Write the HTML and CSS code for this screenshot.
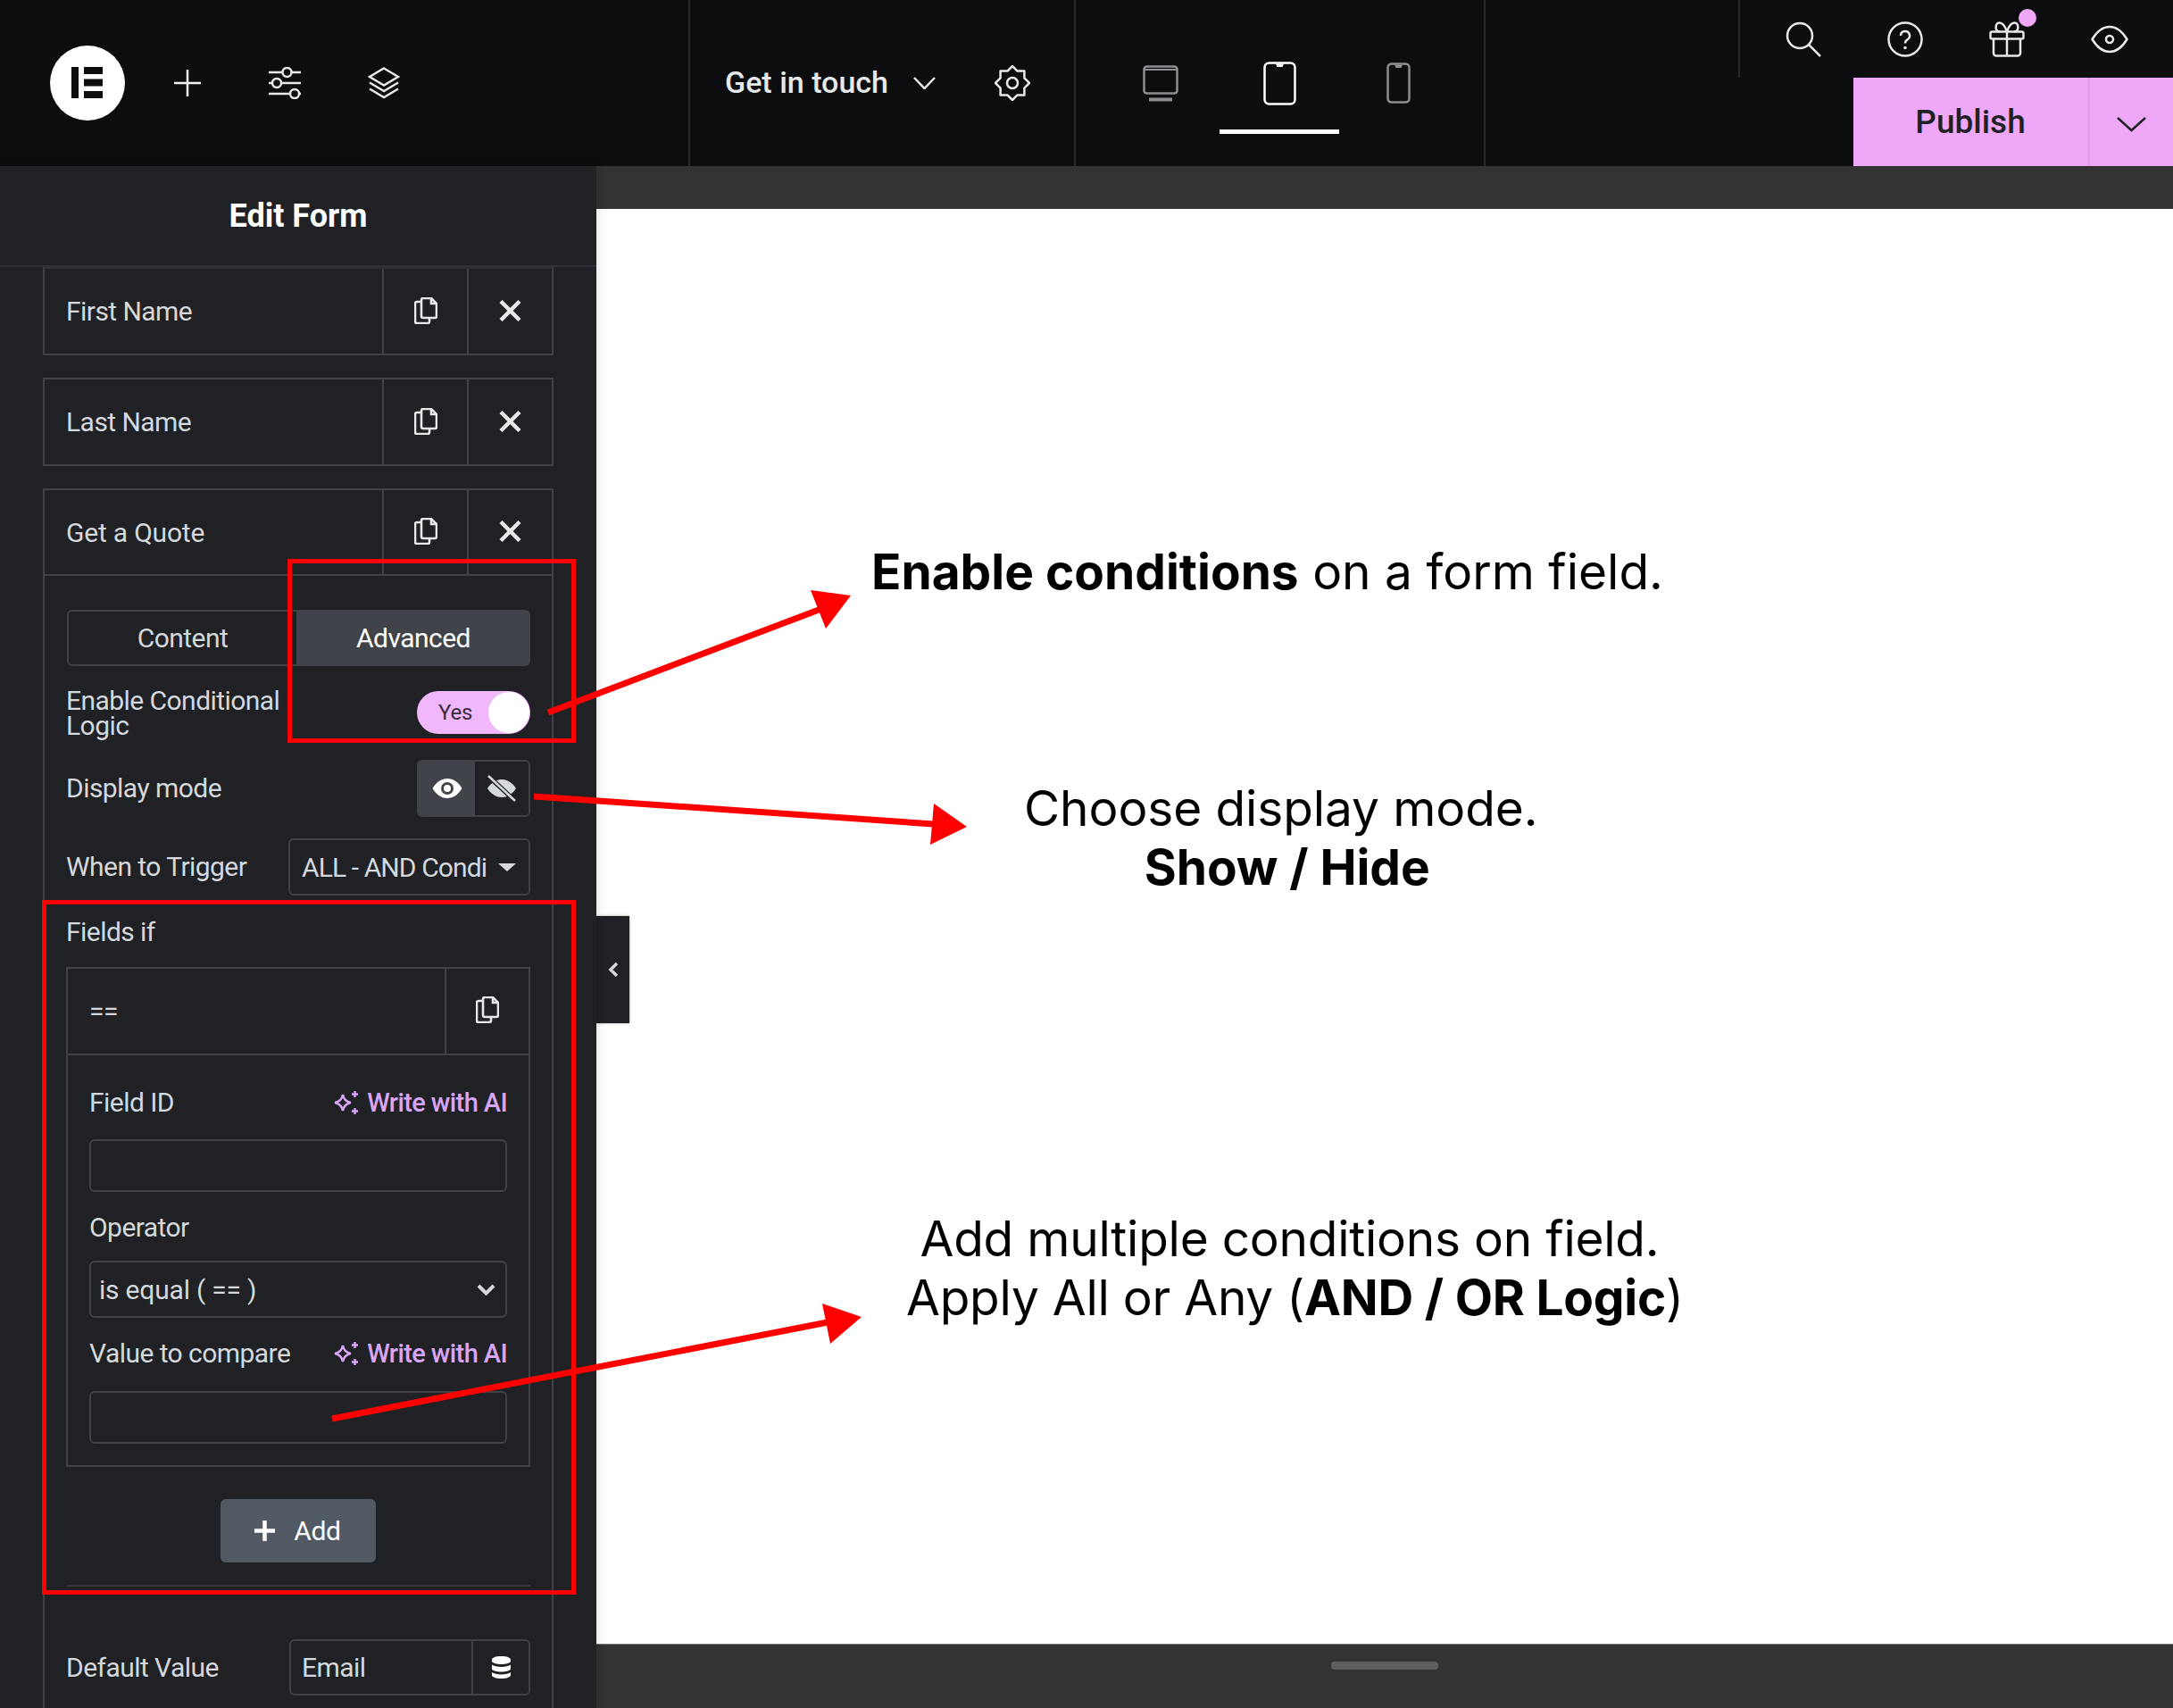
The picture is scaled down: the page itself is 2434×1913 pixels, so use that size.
FILE: index.html
```html
<!DOCTYPE html>
<html lang="en">
<head>
  <meta charset="UTF-8" />
  <meta name="viewport" content="width=device-width, initial-scale=1.0" />
  <title>Edit Form</title>
  <link rel="stylesheet" href="styles.css">
</head>
<body>
<div class="app">

  <header class="topbar">
    <div class="top-left">
      <svg class="logo" width="84" height="84" viewBox="0 0 84 84"><circle cx="42" cy="42" r="42" fill="#fff"/><path fill="#0c0d0e" d="M24 24h8v35h-8zM38 24h21v8H38zM38 37.500h21v8H38zM38 51h21v8H38z"/></svg>
      <svg class="ic-plus" width="30" height="30" viewBox="0 0 30 30"><path d="M15 0v30M0 15h30" stroke="#f2f3f4" stroke-width="2.500"/></svg>
      <svg class="ic-sliders" width="36" height="36" viewBox="0 0 36 36" fill="none" stroke="#e6e8ea" stroke-width="2.500"><path d="M0 6h15M26 6h10M0 18h4M14 18h22M0 30h24M34 30h2"/><circle cx="20.500" cy="6" r="5"/><circle cx="9" cy="18" r="5"/><circle cx="29" cy="30" r="5"/></svg>
      <svg class="ic-layers" width="36" height="36" viewBox="0 0 36 36" fill="none" stroke="#e6e8ea" stroke-width="2.500"><path d="M18 1.500 34 11 18 20.500 2 11z"/><path d="M2 17.500 18 27l16-9.500M2 24.500 18 34l16-9.500"/></svg>
    </div>

    <div class="top-doc">
      <span class="doc-name">Get in touch</span>
      <svg class="doc-chevron" width="25" height="14" viewBox="0 0 25 14" fill="none" stroke="#e6e8ea" stroke-width="2.500"><path d="M1 1l11.500 12L24 1"/></svg>
      <svg class="doc-gear" width="40" height="40" viewBox="0 0 40 40" fill="none" stroke="#e6e8ea" stroke-width="2.500" stroke-linejoin="round"><path d="M20 1 25.550 6.600 33.400 6.600 33.400 14.450 39 20 33.400 25.550 33.400 33.400 25.550 33.400 20 39 14.450 33.400 6.600 33.400 6.600 25.550 1 20 6.600 14.450 6.600 6.600 14.450 6.600z"/><circle cx="20" cy="20" r="6"/></svg>
    </div>

    <div class="top-devices">
      <div class="device-tab">
        <svg width="40" height="41" viewBox="0 0 40 41" fill="none" stroke="#8b8e92" stroke-width="2.500"><rect x="1.500" y="1.500" width="37" height="30" rx="3"/><path d="M1.500 5h37" stroke-width="2"/><path d="M7 38.500h26" stroke-width="4"/></svg>
      </div>
      <div class="device-tab active">
        <svg width="37" height="49" viewBox="0 0 37 49" fill="none" stroke="#fff" stroke-width="2.500"><rect x="1.500" y="1.500" width="34" height="46" rx="5"/><path d="M14 2.500h9l-1.500 3.500h-6z" fill="#fff" stroke="none"/></svg>
      </div>
      <div class="device-tab">
        <svg width="27" height="46" viewBox="0 0 27 46" fill="none" stroke="#8b8e92" stroke-width="2.500"><rect x="1.500" y="1.500" width="24" height="43" rx="4"/><path d="M9 2.500h9l-1.500 3.500h-6z" fill="#8b8e92" stroke="none"/></svg>
      </div>
    </div>

    <div class="top-right">
      <div class="top-tools">
        <svg width="40" height="40" viewBox="0 0 40 40" fill="none" stroke="#e6e8ea" stroke-width="2.500"><circle cx="16" cy="16" r="14"/><path d="M26 26l13 13"/></svg>
        <svg width="40" height="40" viewBox="0 0 40 40" fill="none" stroke="#e6e8ea" stroke-width="2.500"><circle cx="20" cy="20" r="18.500"/><path d="M15 16a5 5 0 1 1 7.500 4.300c-1.700 1-2.500 2-2.500 4.200"/><circle cx="20" cy="29.500" r="1.800" fill="#e6e8ea" stroke="none"/></svg>
        <div class="gift">
          <svg width="40" height="40" viewBox="0 0 40 40" fill="none" stroke="#e6e8ea" stroke-width="2.500"><rect x="1.500" y="11.500" width="37" height="8" rx="2"/><path d="M5 19.500v16a3 3 0 0 0 3 3h24a3 3 0 0 0 3-3v-16M20 11.500v27M20 11.500c-2-6-5-10-8.500-10-5 0-5.500 10 .5 10M20 11.500c2-6 5-10 8.500-10 5 0 5.500 10-.5 10"/></svg>
          <span class="gift-dot"></span>
        </div>
        <svg width="42" height="40" viewBox="0 0 42 40" fill="none" stroke="#e6e8ea" stroke-width="2.500"><path d="M1.500 20C7 11 13.500 6 21 6s14 5 19.500 14C35 29 28.500 34 21 34S7 29 1.500 20z"/><circle cx="21" cy="20" r="4"/></svg>
      </div>
      <div class="publish">
        <span class="publish-label">Publish</span>
        <span class="publish-more">
          <svg width="33" height="17" viewBox="0 0 33 17" fill="none" stroke="#1f2124" stroke-width="2.500"><path d="M1 1l15.500 14L32 1"/></svg>
        </span>
      </div>
    </div>
  </header>

  <div class="workspace">
    <aside class="panel">
      <div class="panel-title">Edit Form</div>

      <div class="field-row first">
        <div class="field-name">First Name</div>
        <div class="field-btn"><svg class="copy" width="26" height="30" viewBox="0 0 26 30" fill="none" stroke="#e6e8ea" stroke-width="2.600"><path d="M8 5H3a2 2 0 0 0-2 2v20a2 2 0 0 0 2 2h12a2 2 0 0 0 2-2v-4"/><path d="M8 3a2 2 0 0 1 2-2h9l6 6v14a2 2 0 0 1-2 2H10a2 2 0 0 1-2-2z"/><path d="M19 1v6h6"/></svg></div>
        <div class="field-btn"><svg width="25" height="24" viewBox="0 0 25 24" stroke="#e6e8ea" stroke-width="4.500"><path d="M2 1.500l21 21M23 1.500l-21 21"/></svg></div>
      </div>

      <div class="field-row">
        <div class="field-name">Last Name</div>
        <div class="field-btn"><svg class="copy" width="26" height="30" viewBox="0 0 26 30" fill="none" stroke="#e6e8ea" stroke-width="2.600"><path d="M8 5H3a2 2 0 0 0-2 2v20a2 2 0 0 0 2 2h12a2 2 0 0 0 2-2v-4"/><path d="M8 3a2 2 0 0 1 2-2h9l6 6v14a2 2 0 0 1-2 2H10a2 2 0 0 1-2-2z"/><path d="M19 1v6h6"/></svg></div>
        <div class="field-btn"><svg width="25" height="24" viewBox="0 0 25 24" stroke="#e6e8ea" stroke-width="4.500"><path d="M2 1.500l21 21M23 1.500l-21 21"/></svg></div>
      </div>

      <div class="field-open">
        <div class="field-row inner">
          <div class="field-name quote">Get a Quote</div>
          <div class="field-btn"><svg class="copy" width="26" height="30" viewBox="0 0 26 30" fill="none" stroke="#e6e8ea" stroke-width="2.600"><path d="M8 5H3a2 2 0 0 0-2 2v20a2 2 0 0 0 2 2h12a2 2 0 0 0 2-2v-4"/><path d="M8 3a2 2 0 0 1 2-2h9l6 6v14a2 2 0 0 1-2 2H10a2 2 0 0 1-2-2z"/><path d="M19 1v6h6"/></svg></div>
          <div class="field-btn"><svg width="25" height="24" viewBox="0 0 25 24" stroke="#e6e8ea" stroke-width="4.500"><path d="M2 1.500l21 21M23 1.500l-21 21"/></svg></div>
        </div>

        <div class="field-body">
          <div class="tabs">
            <div class="tab">Content</div>
            <div class="tab selected">Advanced</div>
          </div>

          <div class="row enable-row">
            <div class="label enable-label">Enable Conditional Logic</div>
            <div class="toggle"><span class="toggle-text">Yes</span><span class="toggle-knob"></span></div>
          </div>

          <div class="row mode-row">
            <div class="label">Display mode</div>
            <div class="choices">
              <div class="choice selected">
                <svg width="34" height="24" viewBox="0 0 34 24"><path fill="#fff" fill-rule="evenodd" d="M17 1C9.500 1 4 6 .5 12 4 18 9.500 23 17 23s13-5 16.500-11C30 6 24.500 1 17 1zm0 4a7 7 0 1 1 0 14 7 7 0 0 1 0-14z"/><circle cx="17" cy="12" r="4" fill="#fff"/></svg>
              </div>
              <div class="choice">
                <svg width="36" height="30" viewBox="0 0 36 30"><path fill="#d5d8dc" d="M18 5c7 0 12.500 4.500 16 10-1.500 2.500-3.500 4.700-6 6.500L11.500 6.500C13.500 5.500 15.700 5 18 5zM7.500 9 24 24c-1.900.6-3.900 1-6 1-7 0-12.500-4.500-16-10 1.400-2.300 3.300-4.300 5.500-6z"/><path d="M3 1l30 28" stroke="#1f2124" stroke-width="5"/><path d="M3 1l30 28" stroke="#d5d8dc" stroke-width="2.500"/></svg>
              </div>
            </div>
          </div>

          <div class="row trigger-row">
            <div class="label">When to Trigger</div>
            <div class="select-box">
              <span class="select-text">ALL - AND Condi</span>
              <span class="select-caret"></span>
            </div>
          </div>

          <div class="label fields-label">Fields if</div>

          <div class="repeater">
            <div class="repeater-head">
              <div class="repeater-name">==</div>
              <div class="repeater-btn"><svg class="copy" width="26" height="30" viewBox="0 0 26 30" fill="none" stroke="#e6e8ea" stroke-width="2.600"><path d="M8 5H3a2 2 0 0 0-2 2v20a2 2 0 0 0 2 2h12a2 2 0 0 0 2-2v-4"/><path d="M8 3a2 2 0 0 1 2-2h9l6 6v14a2 2 0 0 1-2 2H10a2 2 0 0 1-2-2z"/><path d="M19 1v6h6"/></svg></div>
            </div>
            <div class="repeater-body">
              <div class="label-row">
                <div class="label">Field ID</div>
                <div class="ai-link">
                  <svg width="28" height="26" viewBox="0 0 28 26" fill="none" stroke="#d9a5f7" stroke-width="2.400"><path d="M10 4c1 5.500 3.500 8 9 9-5.500 1-8 3.500-9 9-1-5.500-3.500-8-9-9 5.500-1 8-3.500 9-9z"/><path d="M23.500 0v7M20 3.500h7M23.500 19v7M20 22.500h7"/></svg>
                  <span>Write with AI</span>
                </div>
              </div>
              <input class="text-input first-input" type="text">
              <div class="label operator-label">Operator</div>
              <div class="op-select">
                <span>is equal ( == )</span>
                <svg width="21" height="13" viewBox="0 0 21 13" fill="none" stroke="#d5d8dc" stroke-width="4"><path d="M2 2l8.500 8.500L19 2"/></svg>
              </div>
              <div class="label-row value-row">
                <div class="label">Value to compare</div>
                <div class="ai-link">
                  <svg width="28" height="26" viewBox="0 0 28 26" fill="none" stroke="#d9a5f7" stroke-width="2.400"><path d="M10 4c1 5.500 3.500 8 9 9-5.500 1-8 3.500-9 9-1-5.500-3.500-8-9-9 5.500-1 8-3.500 9-9z"/><path d="M23.500 0v7M20 3.500h7M23.500 19v7M20 22.500h7"/></svg>
                  <span>Write with AI</span>
                </div>
              </div>
              <input class="text-input value-input" type="text">
            </div>
          </div>

          <div class="add-wrap">
            <button class="add-btn">
              <svg width="23" height="23" viewBox="0 0 23 23" stroke="#fff" stroke-width="4.500"><path d="M11.500 0v23M0 11.500h23"/></svg>
              <span>Add</span>
            </button>
          </div>

          <div class="body-rule"></div>

          <div class="row default-row">
            <div class="label">Default Value</div>
            <div class="dynamic-box">
              <span class="dynamic-text">Email</span>
              <span class="dynamic-btn">
                <svg width="21" height="25" viewBox="0 0 21 25" fill="#fff"><path d="M0 4c0-2.500 4.500-4 10.500-4S21 1.500 21 4v2c-1.500 2-5.500 3-10.500 3S1.500 8 0 6zM0 9.500C2 11 6 12 10.500 12S19 11 21 9.500v5c-1.500 2-5.500 3-10.500 3S1.500 16.500 0 14.500zM0 18c2 1.500 6 2.500 10.500 2.500S19 19.500 21 18v3c0 2.500-4.500 4-10.500 4S0 23.500 0 21z"/></svg>
              </span>
            </div>
          </div>
        </div>
      </div>
    </aside>

    <main class="canvas">
      <div class="canvas-strip"></div>
      <div class="canvas-page">
        <div class="collapse-tab">
          <svg width="12" height="18" viewBox="0 0 12 18" fill="none" stroke="#d5d8dc" stroke-width="3.500"><path d="M10 2 3 9l7 7"/></svg>
        </div>
        <p class="note note-enable"><b>Enable conditions</b> on a form field.</p>
        <p class="note note-mode">Choose display mode.<br><b class="note-offset">Show / Hide</b></p>
        <p class="note note-multi"><span class="note-lead">Add multiple conditions on field.</span><br>Apply All or Any (<b>AND / OR Logic</b>)</p>
      </div>
      <div class="canvas-foot"><span class="foot-handle"></span></div>
    </main>
  </div>

  <!-- red markup drawn over the screenshot -->
  <svg class="markup" width="2434" height="1913" viewBox="0 0 2434 1913" fill="none">
    <rect x="324.500" y="628.500" width="318" height="201" stroke="#f00" stroke-width="5"/>
    <rect x="49.500" y="1010.500" width="593" height="773" stroke="#f00" stroke-width="5"/>
    <path d="M614 798 925 680M598 892l448 31M372 1589l555-108" stroke="#f00" stroke-width="7"/>
    <path fill="#f00" d="M908 661l45 6-28 37zM1046 900l37 26-41 20zM921 1460l44 15-35 30z"/>
  </svg>
</div>
</body>
</html>
```

FILE: styles.css
```css
html, body { margin: 0; padding: 0; }
body {
  font-family: "Roboto", "Liberation Sans", sans-serif;
  background: #fff;
  color: #d5d8dc;
}
svg { display: block; flex: none; }

.app {
  position: relative;
  width: 2434px; height: 1913px;
  overflow: hidden;
  display: flex; flex-direction: column;
}

/* top bar */
.topbar {
  height: 186px; flex: none;
  display: flex;
  background: #0c0d0e;
}
.top-left {
  width: 771px; box-sizing: border-box;
  padding-left: 56px;
  display: flex; align-items: center;
}
.ic-plus { margin-left: 55px; }
.ic-sliders { margin-left: 76px; }
.ic-layers { margin-left: 75px; }

.top-doc {
  width: 432px; box-sizing: border-box;
  border-left: 2px solid #26282b;
  padding-left: 39px;
  display: flex; align-items: center;
}
.doc-name { font-size: 34px; font-weight: 500; color: #e6e8ea; white-space: nowrap; margin-top: -2px; }
.doc-chevron { margin-left: 28px; }
.doc-gear { margin-left: 66px; }

.top-devices {
  width: 459px; box-sizing: border-box;
  border-left: 2px solid #26282b;
  padding-left: 28px;
  display: flex; align-items: flex-start;
}
.device-tab {
  width: 134px; height: 150px; box-sizing: border-box;
  margin-right: -1px;
  padding-top: 41px;
  border-bottom: 5px solid transparent;
  display: flex; align-items: center; justify-content: center;
}
.device-tab.active { border-bottom-color: #fff; }

.top-right {
  flex: 1;
  border-left: 2px solid #26282b;
  display: flex; flex-direction: column; align-items: flex-end;
}
.top-tools {
  width: 487px; height: 87px; box-sizing: border-box;
  border-left: 2px solid #26282b;
  padding-left: 51px;
  display: flex; align-items: center; gap: 74px;
}
.gift { position: relative; }
.gift-dot {
  position: absolute; top: -14px; right: -13px;
  width: 20px; height: 20px;
  border-radius: 50%;
  background: #efa8f7;
}
.publish {
  width: 358px; height: 99px;
  display: flex;
  background: #efa8f7;
  color: #1f2124;
}
.publish-label {
  width: 262px;
  display: flex; align-items: center; justify-content: center;
  font-size: 37px; font-weight: 500;
}
.publish-more {
  flex: 1;
  border-left: 3px solid #e79df2;
  display: flex; align-items: center; justify-content: center;
  padding-top: 6px; box-sizing: border-box;
}

.workspace { flex: 1; display: flex; min-height: 0; }

/* left panel */
.panel {
  width: 668px; flex: none;
  background: #1f2124;
  box-shadow: 2px 0 8px rgba(0,0,0,0.12);
  position: relative; z-index: 1;
  letter-spacing: -0.55px;
}
.panel-title {
  height: 113px; box-sizing: border-box;
  border-bottom: 2px solid #2f3136;
  display: flex; align-items: center; justify-content: center;
  font-size: 36px; font-weight: 700; color: #fff;
  letter-spacing: 0;
}
.field-row {
  height: 99px; box-sizing: border-box;
  margin: 25px 48px 0 48px;
  border: 2px solid #3f4246;
  display: flex;
}
.field-row.first { margin-top: 0; border-top-color: #2f3136; }
.field-row.inner { margin: 0; height: 96px; border-width: 0 0 2px 0; }
.field-name {
  width: 378px; flex: none; box-sizing: border-box;
  padding-left: 24px;
  display: flex; align-items: center;
  font-size: 30px;
}
.field-name.quote { letter-spacing: -0.2px; }
.field-btn {
  flex: 1;
  border-left: 2px solid #3f4246;
  display: flex; align-items: center; justify-content: center;
  padding-bottom: 2px;
}
.field-open {
  margin: 25px 48px 0 48px;
  border: 2px solid #3f4246; border-bottom: 0;
  height: 1400px; box-sizing: border-box;
}
.field-body { padding: 38px 24px 0 25px; }

.label { font-size: 30px; line-height: 34px; margin-left: -1px; }
.tabs { display: flex; height: 63px; }
.tab {
  width: 257px; box-sizing: border-box;
  border: 2px solid #3f4246; border-right: 0;
  border-radius: 6px 0 0 6px;
  display: flex; align-items: center; justify-content: center;
  font-size: 30px;
}
.tab.selected {
  width: 262px;
  background: #404349;
  border: 0; border-radius: 0 6px 6px 0;
  color: #fff;
}
.row { display: flex; align-items: center; justify-content: space-between; }
.enable-row { margin-top: 25px; height: 56px; }
.enable-label { width: 250px; line-height: 28px; }
.toggle {
  width: 127px; height: 48px;
  margin-top: -2px;
  border-radius: 24px;
  background: #f0b8fa;
  display: flex; align-items: center; justify-content: space-between;
  letter-spacing: -0.2px;
}
.toggle-text { margin-left: 24px; font-size: 24px; color: #3a2b3e; }
.toggle-knob { width: 46px; height: 46px; border-radius: 50%; background: #fff; margin-right: 1px; }
.mode-row { margin-top: 24px; height: 64px; }
.choices {
  width: 127px; height: 64px; box-sizing: border-box;
  border: 2px solid #3f4246; border-radius: 6px;
  display: flex; overflow: hidden;
}
.choice { flex: 1; display: flex; align-items: center; justify-content: center; }
.choice.selected { flex: none; width: 63px; background: #404349; }
.trigger-row { margin-top: 24px; height: 64px; }
.select-box {
  width: 271px; height: 64px; box-sizing: border-box;
  border: 2px solid #3f4246; border-radius: 6px;
  display: flex; align-items: center;
  padding-left: 13px;
}
.select-text {
  width: 207px; white-space: nowrap;
  font-size: 30px; letter-spacing: -0.9px;
}
.select-caret {
  margin-left: 13px;
  border-left: 10px solid transparent;
  border-right: 10px solid transparent;
  border-top: 9px solid #d5d8dc;
}
.fields-label { margin-top: 24px; }

.repeater {
  margin-top: 22px; margin-left: -1px;
  border: 2px solid #3f4246;
  height: 560px; box-sizing: border-box;
}
.repeater-head {
  height: 97px; box-sizing: border-box;
  border-bottom: 2px solid #3f4246;
  display: flex;
}
.repeater-name {
  width: 422px; flex: none; box-sizing: border-box;
  padding-left: 24px;
  display: flex; align-items: center;
  font-size: 30px;
}
.repeater-btn {
  flex: 1;
  border-left: 2px solid #3f4246;
  display: flex; align-items: center; justify-content: center;
  padding-bottom: 4px;
}
.repeater-body { padding: 36px 24px 0 24px; }
.repeater-body .label { margin-left: 0; }
.label-row { display: flex; align-items: center; justify-content: space-between; height: 34px; }
.ai-link {
  display: flex; align-items: center; gap: 9px;
  font-size: 29px; line-height: 34px; font-weight: 500;
  letter-spacing: -0.6px;
  color: #d9a5f7;
}
.text-input {
  display: block;
  width: 100%; height: 59px; box-sizing: border-box;
  border: 2px solid #3f4246; border-radius: 6px;
  background: transparent;
}
.first-input { margin-top: 24px; }
.operator-label { margin-top: 23px; }
.op-select {
  margin-top: 20px;
  height: 64px; box-sizing: border-box;
  border: 2px solid #3f4246; border-radius: 6px;
  padding: 0 11px 0 9px;
  display: flex; align-items: center; justify-content: space-between;
  font-size: 30px; letter-spacing: -0.2px;
}
.value-row { margin-top: 23px; }
.value-input { margin-top: 25px; }

.add-wrap { margin-top: 36px; margin-left: -2px; display: flex; justify-content: center; }
.add-btn {
  width: 174px; height: 71px;
  border: 0; border-radius: 6px;
  background: #515962;
  color: #fff;
  font-family: inherit; font-size: 30px; letter-spacing: -0.3px;
  display: flex; align-items: center; justify-content: center; gap: 21px;
}
.body-rule { margin-top: 25px; height: 2px; background: #35373b; }
.default-row { margin-top: 59px; height: 63px; }
.dynamic-box {
  width: 270px; height: 63px; box-sizing: border-box;
  border: 2px solid #3f4246; border-radius: 6px;
  display: flex; align-items: center;
}
.dynamic-text { width: 202px; box-sizing: border-box; padding-left: 12px; font-size: 30px; }
.dynamic-btn {
  flex: 1; align-self: stretch;
  border-left: 2px solid #3f4246;
  display: flex; align-items: center; justify-content: center;
}

/* canvas side */
.canvas { flex: 1; display: flex; flex-direction: column; min-width: 0; }
.canvas-strip { height: 48px; flex: none; background: #333; }
.canvas-page { flex: 1; background: #fff; position: relative; }
.canvas-foot {
  height: 72px; flex: none;
  background: #333;
  border-top: 1px solid #777; box-sizing: border-box;
  display: flex; justify-content: center;
  padding-top: 19px;
}
.foot-handle { width: 120px; height: 9px; border-radius: 4px; background: #5f5f5f; }
.collapse-tab {
  position: absolute; left: 0; top: 792px;
  width: 37px; height: 120px;
  background: #1f2124;
  box-shadow: 0 0 3px rgba(0,0,0,0.35);
  display: flex; align-items: center; justify-content: center;
}
.note {
  position: absolute; margin: 0;
  font-family: "Inter", "Liberation Sans", sans-serif;
  font-size: 55px; line-height: 66px;
  color: #000; white-space: nowrap; text-align: center;
}
.note b { font-weight: 700; }
.note-enable { left: 308px; top: 373px; }
.note-mode { left: 479px; top: 638px; letter-spacing: -0.1px; }
.note-offset { position: relative; left: 7px; }
.note-multi { left: 347px; top: 1120px; letter-spacing: -0.25px; }
.note-lead { position: relative; left: -6px; }

.markup { position: absolute; left: 0; top: 0; pointer-events: none; z-index: 5; }
```
